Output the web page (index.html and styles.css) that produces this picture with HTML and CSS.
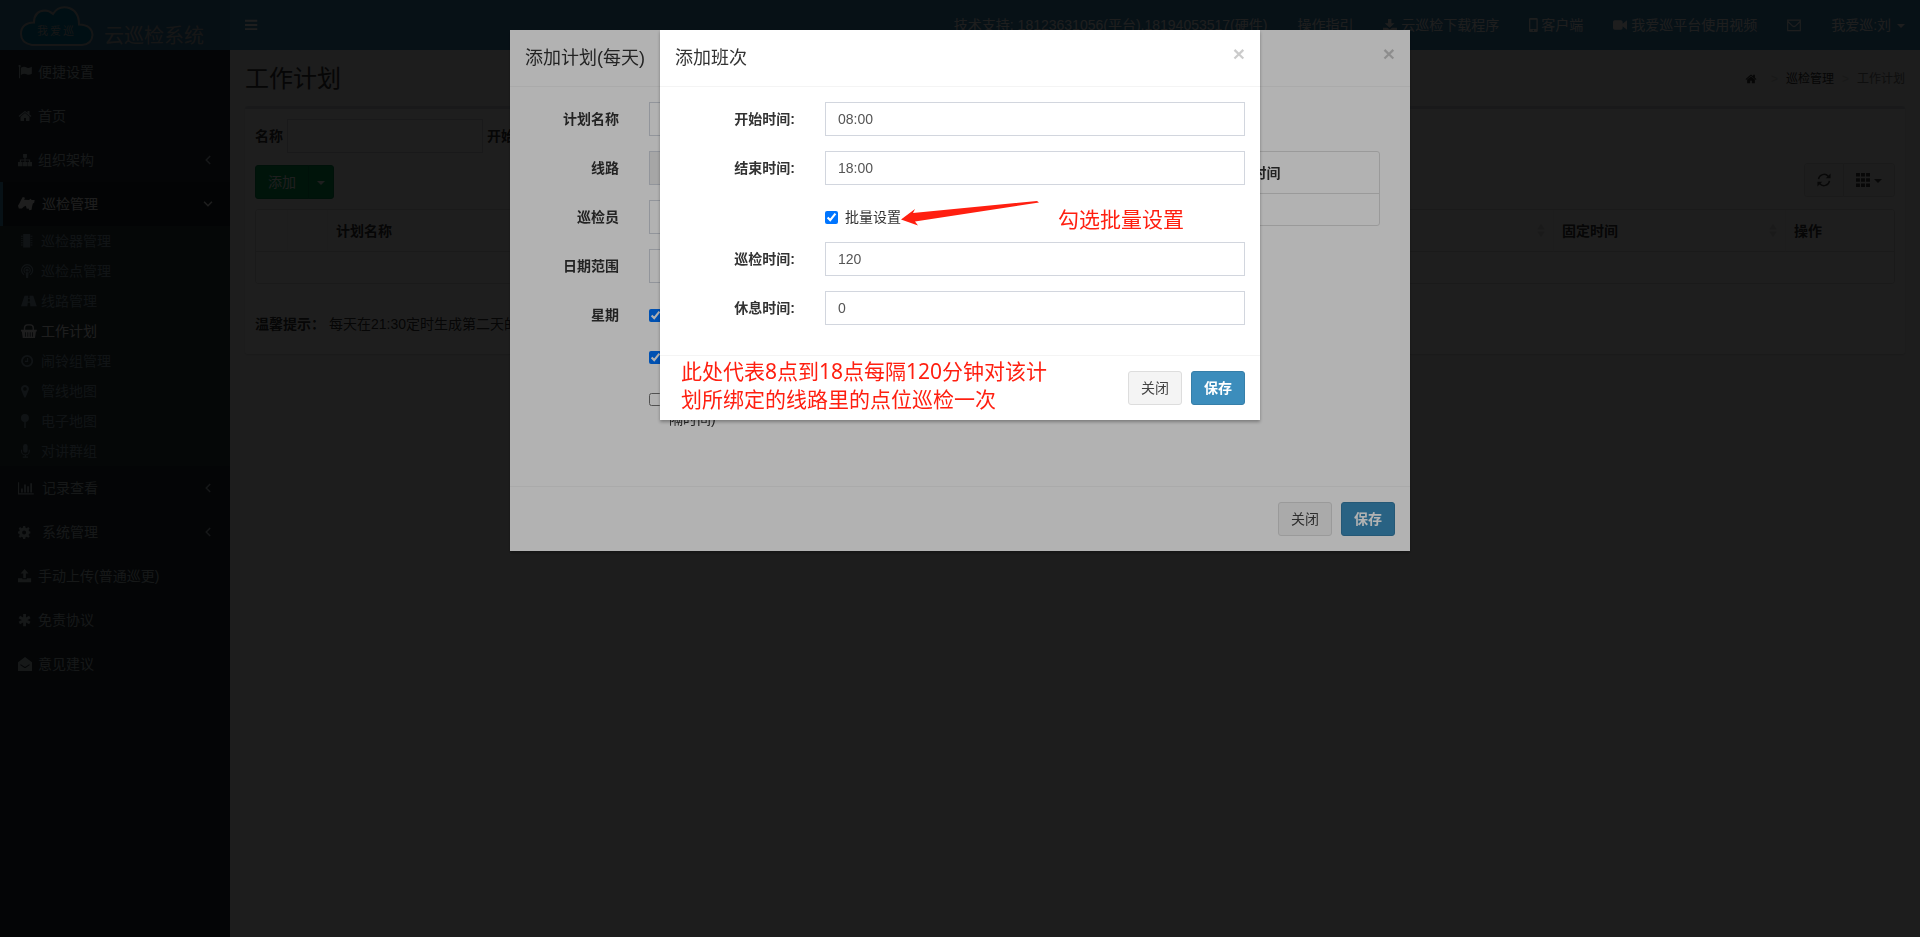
FILE: index.html
```html
<!DOCTYPE html>
<html lang="zh-CN">

<head>
  <meta charset="UTF-8">
  <meta name="viewport" content="width=device-width, initial-scale=1.0">
  <title>工作计划</title>
  <link rel="stylesheet" href="styles.css">
</head>

<body>
  <!-- Icon set -->
  <svg class="icon-set" aria-hidden="true">
    <symbol id="i-bars" viewBox="0 0 16 16" preserveAspectRatio="xMinYMid"><path d="M0 2h14v2.200H0zM0 6.800h14V9H0zM0 11.600h14v2.200H0z"/></symbol>
    <symbol id="i-flag" viewBox="0 0 16 16" preserveAspectRatio="xMinYMid"><path d="M.5 1.200a1.300 1.300 0 1 1 1.900 1.200V15H1.200V2.300A1.300 1.300 0 0 1 .5 1.200zM3.300 3c3-1.600 4.600-1.300 7.200 0 1.900.8 3.500 0 5.300-1v8c-2.200 1.300-3.800 1.700-6 .6-2.300-1.100-4-.7-6.500.8z"/></symbol>
    <symbol id="i-home" viewBox="0 0 1792 1792" preserveAspectRatio="xMinYMid"><path d="M1472 992v480q0 26-19 45t-45 19h-384v-384h-256v384h-384q-26 0-45-19t-19-45v-480q0-1 .5-3t.5-3l575-474 575 474q1 2 1 6zm223-69l-62 74q-8 9-21 11h-3q-13 0-21-7l-692-577-692 577q-12 8-24 7-13-2-21-11l-62-74q-8-10-7-23.5t11-21.5l719-599q32-26 76-26t76 26l244 204v-195q0-14 9-23t23-9h192q14 0 23 9t9 23v408l219 182q10 8 11 21.500t-7 23.500z"/></symbol>
    <symbol id="i-sitemap" viewBox="0 0 16 16" preserveAspectRatio="xMinYMid"><path d="M5.800 1h4.400v4.300H8.700v2h5.200v3H16V15h-5v-4.700h1.500V8.600H8.700v1.700h1.800V15h-5v-4.700h1.800V8.600H3.500v1.700H5V15H0v-4.700h2.100v-3h5.200v-2H5.800z"/></symbol>
    <symbol id="i-hands" viewBox="0 0 19 16" preserveAspectRatio="xMinYMid"><path d="M5.500 0L8 .8 7 3l5.500.5L14.500 2l1 1.500h3.500l-.5 3-1.500 1L16 11l-.5 3.500L13 15l-1-2-2 .5L9 10l-2.500 1L4.500 13H1L0 10l2-3.500 1.500-3z"/></symbol>
    <symbol id="i-chip" viewBox="0 0 16 16" preserveAspectRatio="xMinYMid"><path d="M2.500 0h8v15.500h-8zM0 2h2v1H0zM0 4.500h2v1H0zM0 7h2v1H0zM0 9.500h2v1H0zM0 12h2v1H0zM11 2h2v1h-2zM11 4.500h2v1h-2zM11 7h2v1h-2zM11 9.500h2v1h-2zM11 12h2v1h-2z"/></symbol>
    <symbol id="i-podcast" viewBox="0 0 16 16" preserveAspectRatio="xMinYMid"><g fill="none" stroke="currentColor" stroke-width="1.300"><path d="M3.500 12.300a6.300 6.300 0 1 1 7 0"/><path d="M4.500 9.800a3.600 3.600 0 1 1 5 0"/></g><circle cx="7" cy="7" r="1.700"/><path d="M5.300 9.500h3.400L8.100 16H5.900z"/></symbol>
    <symbol id="i-road" viewBox="0 0 18 16" preserveAspectRatio="xMinYMid"><path d="M4 2h4.300l-.2 2.500h1.800L9.700 2H14l4 12h-7.300l-.4-4H7.700l-.4 4H0zM8 5.500L7.800 8.700h2.400L10 5.500z" fill-rule="evenodd"/></symbol>
    <symbol id="i-basket" viewBox="0 0 18 16" preserveAspectRatio="xMinYMid"><path d="M4 7V4.500Q4 1 7.500 1h3Q14 1 14 4.500V7" fill="none" stroke="currentColor" stroke-width="1.600"/><path d="M0 6.500h18v2h-1L16 16H2L1 8.500H0zM4.500 9.500v5h1v-5zM7.300 9.500v5h1v-5zM10 9.500v5h1v-5zM12.700 9.500v5h1v-5z" fill-rule="evenodd"/></symbol>
    <symbol id="i-clock" viewBox="0 0 16 16" preserveAspectRatio="xMinYMid"><g fill="none" stroke="currentColor"><circle cx="7" cy="8" r="5.900" stroke-width="2"/><path d="M7.500 4.500v4h-3" stroke-width="1.300"/></g></symbol>
    <symbol id="i-marker" viewBox="0 0 10 16" preserveAspectRatio="xMinYMid"><path d="M4.500 1a4.500 4.500 0 0 1 4 6.500L5.300 15q-.8 1-1.600 0L.5 7.500A4.500 4.500 0 0 1 4.500 1zm0 2.500a2 2 0 1 0 0 4.200 2 2 0 0 0 0-4.200z" fill-rule="evenodd"/></symbol>
    <symbol id="i-pin" viewBox="0 0 10 16" preserveAspectRatio="xMinYMid"><circle cx="4.500" cy="4.500" r="4.500"/><path d="M3.700 9h1.700v7H3.700z"/></symbol>
    <symbol id="i-mic" viewBox="0 0 11 16" preserveAspectRatio="xMinYMid"><rect x="2.500" y="0" width="5" height="10" rx="2.500"/><path d="M.6 6.500v2a4.400 4 0 0 0 8.800 0v-2M5 12.500V15M2 15h6" fill="none" stroke="currentColor" stroke-width="1.200"/></symbol>
    <symbol id="i-chart" viewBox="0 0 18 16" preserveAspectRatio="xMinYMid"><path d="M0 1.500h1.300V14H18v1.300H0zM3.500 8.500h2V13h-2zM7 4h2v9H7zM10.500 6h2v7h-2zM14 2.500h2V13h-2z"/></symbol>
    <symbol id="i-cog" viewBox="0 0 16 16" preserveAspectRatio="xMinYMid"><path d="M5.900 1h2.300l.4 2 1.400.6 1.700-1.200 1.600 1.700-1.200 1.600.5 1.300 1.500.4v2.300l-1.500.4-.5 1.300 1.200 1.700-1.600 1.600-1.700-1.200-1.400.6-.4 2H5.900l-.4-2-1.400-.6-1.700 1.200-1.600-1.600L2 11.400l-.5-1.300L0 9.700V7.400L1.500 7 2 5.700.8 4.100l1.600-1.700 1.700 1.200L5.500 3zM7 6.200a2.300 2.300 0 1 0 0 4.600 2.300 2.300 0 0 0 0-4.600z" fill-rule="evenodd"/></symbol>
    <symbol id="i-upload" viewBox="0 0 16 16" preserveAspectRatio="xMinYMid"><path d="M7.500 0L12 5H9v5.500H6V5H3zM0 10.500h5v1.200h5v-1.200h5V15H0z"/></symbol>
    <symbol id="i-download" viewBox="0 0 16 16" preserveAspectRatio="xMinYMid"><path d="M5.700 1h3.900v5h3.600L7.700 11.200 2 6h3.700zM0 11h5l2.700 2 2.700-2H16v4H0z"/></symbol>
    <symbol id="i-asterisk" viewBox="0 0 16 16" preserveAspectRatio="xMinYMid"><path d="M7.500 1v14M1.500 4.500l12 7M13.500 4.500l-12 7" fill="none" stroke="currentColor" stroke-width="3.200"/></symbol>
    <symbol id="i-envelope-open" viewBox="0 0 16 16" preserveAspectRatio="xMinYMid"><path d="M8 0l8 6v10H0V6zM2.500 9L7 12.200q1 .6 2 0L13.500 9l-.6-.8L9 10.900q-1 .7-2 0L3.100 8.200z" fill-rule="evenodd"/></symbol>
    <symbol id="i-envelope" viewBox="0 0 16 16" preserveAspectRatio="xMinYMid"><path d="M.8 2.400h14.400v12H.8zM1 4l5.500 5.200q1.500 1.200 3 0L15 4" fill="none" stroke="currentColor" stroke-width="1.300"/></symbol>
    <symbol id="i-phone" viewBox="0 0 10 16" preserveAspectRatio="xMinYMid"><path d="M1.500 0h7Q10 0 10 1.500v13Q10 16 8.500 16h-7Q0 16 0 14.500v-13Q0 0 1.500 0zm0 2v10.500h7V2zM5 13.300a.9.900 0 1 0 0 1.800.9.900 0 0 0 0-1.800z" fill-rule="evenodd"/></symbol>
    <symbol id="i-video" viewBox="0 0 16 16" preserveAspectRatio="xMinYMid"><path d="M2 2.500h7q2 0 2 2v2.200L16 2.500v11l-5-4.200v2.200q0 2-2 2H2q-2 0-2-2v-7q0-2 2-2z"/></symbol>
    <symbol id="i-angle" viewBox="0 0 16 16"><path d="M10.500 3.500L6 8l4.500 4.500" fill="none" stroke="currentColor" stroke-width="1.700"/></symbol>
    <symbol id="i-refresh" viewBox="0 0 16 16"><path d="M1.700 7A6.400 6.400 0 0 1 13 4M14.300 9A6.400 6.400 0 0 1 3 12" fill="none" stroke="currentColor" stroke-width="1.700"/><path d="M15.500.5V6H10zM.5 15.500V10H6z"/></symbol>
    <symbol id="i-grid" viewBox="0 0 16 16"><path d="M0 0h4.500v4H0zM5.700 0h4.500v4H5.700zM11.500 0H16v4h-4.500zM0 6h4.500v4H0zM5.700 6h4.500v4H5.700zM11.500 6H16v4h-4.500zM0 12h4.500v4H0zM5.700 12h4.500v4H5.700zM11.500 12H16v4h-4.500z"/></symbol>
  </svg>

  <!-- Header section -->
  <header class="main-header">
    <a class="logo" href="#">
      <svg class="logo-cloud" viewBox="0 0 74 42">
        <path d="M12 40Q1 38 1 29 1 18 14 17.500 14 6 25 5.500q4 0 8 3.500Q38 1 47 2.500 59 5 59 19.500 72 20 72.500 30 72 39 62 40z" fill="#007fa8" stroke="#bbb" stroke-width="2"/>
        <text class="logo-mark" y="30"><tspan x="17">我</tspan><tspan x="30">爱</tspan><tspan x="43">巡</tspan></text>
      </svg>
      <span class="logo-text">云巡检系统</span>
    </a>
    <nav class="navbar">
      <button class="toggle" type="button" aria-label="菜单"><svg class="icon"><use href="#i-bars"/></svg></button>
      <ul class="nav-links">
        <li><a href="#">技术支持: 18123631056(平台),18194053517(硬件)</a></li>
        <li><a href="#">操作指引</a></li>
        <li><a href="#"><svg class="icon"><use href="#i-download"/></svg> 云巡检下载程序</a></li>
        <li><a href="#"><svg class="icon icon-phone"><use href="#i-phone"/></svg>客户端</a></li>
        <li><a href="#"><svg class="icon"><use href="#i-video"/></svg> 我爱巡平台使用视频</a></li>
        <li><a href="#" aria-label="消息"><svg class="icon"><use href="#i-envelope"/></svg></a></li>
        <li><a href="#">我爱巡:刘 <span class="caret user-caret"></span></a></li>
      </ul>
    </nav>
  </header>

  <div class="wrapper">
    <!-- Sidebar section -->
    <aside class="sidebar">
      <ul class="menu">
        <li><a href="#"><svg class="icon"><use href="#i-flag"/></svg>便捷设置</a></li>
        <li><a href="#"><svg class="icon"><use href="#i-home"/></svg>首页</a></li>
        <li><a href="#"><svg class="icon"><use href="#i-sitemap"/></svg>组织架构<svg class="icon arrow"><use href="#i-angle"/></svg></a></li>
        <li class="active">
          <a class="wide" href="#"><svg class="icon"><use href="#i-hands"/></svg>巡检管理<svg class="icon arrow open"><use href="#i-angle"/></svg></a>
          <ul class="submenu">
            <li><a href="#"><svg class="icon"><use href="#i-chip"/></svg>巡检器管理</a></li>
            <li><a href="#"><svg class="icon"><use href="#i-podcast"/></svg>巡检点管理</a></li>
            <li><a href="#"><svg class="icon"><use href="#i-road"/></svg>线路管理</a></li>
            <li class="current"><a href="#"><svg class="icon"><use href="#i-basket"/></svg>工作计划</a></li>
            <li><a href="#"><svg class="icon"><use href="#i-clock"/></svg>闹铃组管理</a></li>
            <li><a href="#"><svg class="icon"><use href="#i-marker"/></svg>管线地图</a></li>
            <li><a href="#"><svg class="icon"><use href="#i-pin"/></svg>电子地图</a></li>
            <li><a href="#"><svg class="icon"><use href="#i-mic"/></svg>对讲群组</a></li>
          </ul>
        </li>
        <li><a class="wide" href="#"><svg class="icon"><use href="#i-chart"/></svg>记录查看<svg class="icon arrow"><use href="#i-angle"/></svg></a></li>
        <li><a class="wide" href="#"><svg class="icon"><use href="#i-cog"/></svg>系统管理<svg class="icon arrow"><use href="#i-angle"/></svg></a></li>
        <li><a href="#"><svg class="icon"><use href="#i-upload"/></svg>手动上传(普通巡更)</a></li>
        <li><a href="#"><svg class="icon"><use href="#i-asterisk"/></svg>免责协议</a></li>
        <li><a href="#"><svg class="icon"><use href="#i-envelope-open"/></svg>意见建议</a></li>
      </ul>
    </aside>

    <!-- Main content section -->
    <main class="content">
      <div class="content-header">
        <h1>工作计划</h1>
        <ol class="breadcrumb">
          <li><a href="#" aria-label="首页"><svg class="icon"><use href="#i-home"/></svg></a></li>
          <li><a href="#">巡检管理</a></li>
          <li>工作计划</li>
        </ol>
      </div>

      <section class="box">
        <form class="search">
          <label for="search-name">名称</label>
          <input class="form-control" id="search-name" type="text">
          <label for="search-start">开始时间</label>
          <input class="form-control" id="search-start" type="text">
        </form>

        <div class="toolbar">
          <div class="btn-group add-group">
            <button class="btn btn-success" type="button">添加</button>
            <button class="btn btn-success btn-caret" type="button" aria-label="更多"><span class="caret"></span></button>
          </div>
          <div class="btn-group">
            <button class="btn btn-default" type="button" aria-label="刷新"><svg class="icon"><use href="#i-refresh"/></svg></button>
            <button class="btn btn-default" type="button" aria-label="列"><svg class="icon"><use href="#i-grid"/></svg> <span class="caret"></span></button>
          </div>
        </div>

        <table class="table plan-table">
          <thead>
            <tr>
              <th class="col-check"></th>
              <th class="col-index"></th>
              <th>计划名称</th>
              <th>线路</th>
              <th>巡检员</th>
              <th>日期范围</th>
              <th><div class="sortable">星期</div></th>
              <th class="col-time"><div class="sortable">固定时间</div></th>
              <th class="col-action">操作</th>
            </tr>
          </thead>
          <tbody>
            <tr><td colspan="9"></td></tr>
          </tbody>
        </table>

        <p class="tip"><strong>温馨提示：</strong>每天在21:30定时生成第二天的计划</p>
      </section>
    </main>
  </div>

  <!-- Plan dialog -->
  <div class="backdrop backdrop-plan"></div>
  <div class="modal modal-plan" role="dialog" aria-labelledby="plan-title">
    <div class="modal-header">
      <h4 id="plan-title">添加计划(每天)</h4>
      <button class="close" type="button" aria-label="关闭">×</button>
    </div>
    <div class="modal-body plan-body">
      <form class="plan-form">
        <div class="form-group">
          <label for="plan-name">计划名称</label>
          <div class="field"><input class="form-control" id="plan-name" type="text"></div>
        </div>
        <div class="form-group">
          <label for="plan-line">线路</label>
          <div class="field"><input class="form-control" id="plan-line" type="text" readonly></div>
        </div>
        <div class="form-group">
          <label for="plan-user">巡检员</label>
          <div class="field"><input class="form-control" id="plan-user" type="text"></div>
        </div>
        <div class="form-group">
          <label for="plan-range">日期范围</label>
          <div class="field"><input class="form-control" id="plan-range" type="text"></div>
        </div>
        <div class="form-group">
          <label for="plan-week">星期</label>
          <div class="field">
            <label class="checkbox"><input id="plan-week" type="checkbox" checked>星期一</label>
          </div>
        </div>
        <div class="form-group">
          <div class="field">
            <label class="checkbox"><input type="checkbox" checked>星期日</label>
          </div>
        </div>
        <div class="form-group">
          <div class="field">
            <label class="checkbox"><input type="checkbox"><span>固定时间(巡检间<br>隔时间)</span></label>
          </div>
        </div>
      </form>
      <div class="shift-list">
        <table class="table shift-table">
          <thead><tr><th>开始时间</th><th>结束时间</th></tr></thead>
          <tbody><tr><td colspan="2"></td></tr></tbody>
        </table>
      </div>
    </div>
    <div class="modal-footer">
      <button class="btn btn-default" type="button">关闭</button>
      <button class="btn btn-primary" type="button">保存</button>
    </div>
  </div>

  <!-- Shift dialog -->
  <div class="backdrop backdrop-shift"></div>
  <div class="modal modal-shift" role="dialog" aria-labelledby="shift-title">
    <div class="modal-header">
      <h4 id="shift-title">添加班次</h4>
      <button class="close" type="button" aria-label="关闭">×</button>
    </div>
    <form class="modal-body shift-body">
      <div class="form-group">
        <label for="shift-start">开始时间:</label>
        <div class="field"><input class="form-control" id="shift-start" type="text" value="08:00"></div>
      </div>
      <div class="form-group">
        <label for="shift-end">结束时间:</label>
        <div class="field"><input class="form-control" id="shift-end" type="text" value="18:00"></div>
      </div>
      <div class="form-group">
        <div class="field">
          <label class="checkbox"><input type="checkbox" checked>批量设置</label>
        </div>
      </div>
      <div class="form-group">
        <label for="shift-patrol">巡检时间:</label>
        <div class="field"><input class="form-control" id="shift-patrol" type="text" value="120"></div>
      </div>
      <div class="form-group">
        <label for="shift-rest">休息时间:</label>
        <div class="field"><input class="form-control" id="shift-rest" type="text" value="0"></div>
      </div>
    </form>
    <div class="modal-footer">
      <button class="btn btn-default" type="button">关闭</button>
      <button class="btn btn-primary" type="button">保存</button>
    </div>

    <!-- Notes drawn over the dialog -->
    <svg class="note-arrow" viewBox="0 0 138 26"><path d="M0 18.500L14 8l-2 4L136 0l2 1.500L14 20.500l3 4z" fill="#ff1f10"/></svg>
    <p class="note note-check">勾选批量设置</p>
    <p class="note note-result">此处代表8点到18点每隔120分钟对该计<br>划所绑定的线路里的点位巡检一次</p>
  </div>
</body>

</html>
```

FILE: styles.css
```css
* {
  box-sizing: border-box;
}

body {
  margin: 0;
  min-height: 100vh;
  overflow: hidden;
  display: flex;
  flex-direction: column;
  font-family: "Liberation Sans", "Noto Sans CJK SC", sans-serif;
  font-size: 14px;
  line-height: 20px;
  color: #333;
  background-color: #f0f0f0;
}

ul,
ol {
  list-style: none;
  margin: 0;
  padding: 0;
}

a {
  color: inherit;
  text-decoration: none;
}

h1,
h4,
p {
  margin: 0;
  font-weight: 400;
}

button,
input {
  font: inherit;
}

.icon-set {
  position: absolute;
  width: 0;
  height: 0;
}

.icon {
  width: 14px;
  height: 14px;
  fill: currentColor;
  vertical-align: -2px;
}

.icon-phone {
  width: 12px;
}

.caret {
  display: inline-block;
  border-top: 4px solid;
  border-left: 4px solid transparent;
  border-right: 4px solid transparent;
  vertical-align: middle;
}

.user-caret {
  margin-left: 2px;
}

/* Header */
.main-header {
  display: flex;
  height: 50px;
  color: #fff;
  background-color: #3c8dbc;
}

.logo {
  display: flex;
  gap: 10px;
  width: 230px;
  padding: 5px 20px;
  background-color: #367fa9;
}

.logo-cloud {
  width: 74px;
  height: 42px;
}

.logo-mark {
  font-family: "Liberation Serif", "Noto Sans CJK SC", serif;
  font-size: 11px;
  fill: #bbb;
}

.logo-text {
  padding-top: 16px;
  font-size: 20px;
  line-height: 30px;
  color: #bbb;
}

.navbar {
  flex: 1;
  display: flex;
  justify-content: space-between;
}

.toggle {
  padding: 15px;
  border: 0;
  color: #fff;
  background: none;
}

.nav-links {
  display: flex;
}

.nav-links a {
  display: block;
  padding: 15px;
  white-space: nowrap;
}

/* Sidebar */
.wrapper {
  flex: 1;
  display: flex;
}

.sidebar {
  width: 230px;
  color: #b8c7ce;
  background-color: #222d32;
}

.menu > li > a {
  display: flex;
  align-items: center;
  padding: 12px 15px;
  border-left: 3px solid transparent;
}

.menu .icon {
  margin-right: 6px;
}

.menu .wide .icon {
  width: 18px;
}

.menu .arrow,
.menu .wide .arrow {
  width: 14px;
  margin: 0 0 0 auto;
}

.menu .open {
  transform: rotate(-90deg);
}

.menu > .active > a {
  color: #fff;
  background-color: #1e282c;
  border-left-color: #3c8dbc;
}

.submenu {
  color: #8aa4af;
  background-color: #2c3b41;
}

.submenu a {
  display: flex;
  align-items: center;
  padding: 5px 5px 5px 21px;
}

.menu .submenu .icon {
  width: 16px;
  margin-right: 4px;
}

.submenu .current {
  color: #fff;
}

/* Content */
.content {
  flex: 1;
  padding: 15px;
}

.content-header {
  display: flex;
  justify-content: space-between;
  align-items: center;
  margin-bottom: 14px;
}

.content-header h1 {
  font-size: 24px;
  line-height: 27px;
}

.breadcrumb {
  display: flex;
  font-size: 12px;
  color: #777;
}

.breadcrumb a {
  color: #333;
}

.breadcrumb li + li::before {
  content: ">";
  padding: 0 8px;
  color: #ccc;
}

.breadcrumb .icon {
  width: 12px;
  height: 12px;
  margin-right: 6px;
}

.box {
  padding: 10px;
  border-top: 3px solid #d2d6de;
  border-radius: 3px;
  background-color: #fff;
  box-shadow: 0 1px 1px rgba(0, 0, 0, .1);
}

.search {
  display: flex;
  align-items: center;
  gap: 4px;
}

.search label {
  font-weight: 700;
}

.search .form-control {
  width: 196px;
}

.toolbar {
  display: flex;
  justify-content: space-between;
  align-items: flex-start;
  margin: 10px 0;
}

.add-group {
  padding-top: 2px;
}

.tip {
  padding: 30px 0 10px;
}

.tip strong {
  margin-right: 4px;
}

/* Controls */
.form-control {
  display: block;
  width: 100%;
  height: 34px;
  padding: 6px 12px;
  border: 1px solid #d2d6de;
  color: #555;
  background-color: #fff;
}

.form-control[readonly] {
  background-color: #eee;
}

.btn {
  padding: 6px 12px;
  border: 1px solid;
  border-radius: 3px;
}

.btn-default {
  color: #444;
  background-color: #f4f4f4;
  border-color: #ddd;
}

.btn-primary {
  color: #fff;
  font-weight: 700;
  background-color: #3c8dbc;
  border-color: #367fa9;
}

.btn-success {
  color: #fff;
  background-color: #00a65a;
  border-color: #008d4c;
}

.btn-group {
  display: flex;
}

.btn-group .btn:first-child {
  border-radius: 3px 0 0 3px;
}

.btn-group .btn:last-child {
  margin-left: -1px;
  border-radius: 0 3px 3px 0;
}

.btn-caret {
  padding: 6px 8px;
}

/* Tables */
.table {
  width: 100%;
  table-layout: fixed;
  border: 1px solid #ddd;
  border-radius: 3px;
  border-spacing: 0;
}

.table th {
  height: 42px;
  padding: 0 8px;
  border-bottom: 1px solid #ddd;
  text-align: left;
}

.plan-table th + th {
  border-left: 1px solid #f1f1f1;
}

.table td {
  height: 31px;
}

.col-check {
  width: 31px;
}

.col-index {
  width: 40px;
}

.col-time {
  width: 232px;
}

.col-action {
  width: 109px;
}

.sortable {
  display: flex;
  justify-content: space-between;
  align-items: center;
}

/* Up and down arrows of a sortable column */
.sortable::after {
  content: "";
  width: 8px;
  height: 14px;
  background-color: #ddd;
  clip-path: polygon(50% 0, 100% 43%, 0 43%, 0 57%, 100% 57%, 50% 100%, 0 57%, 0 43%);
}

/* Dialogs */
.backdrop {
  position: fixed;
  inset: 0;
  background-color: #000;
}

.backdrop-plan {
  opacity: .83;
}

.backdrop-shift {
  opacity: .3;
}

.modal {
  position: fixed;
  top: 30px;
  left: 50%;
  transform: translateX(-50%);
  background-color: #fff;
  box-shadow: 0 2px 3px rgba(0, 0, 0, .3);
}

.modal-plan {
  width: 900px;
}

.modal-shift {
  width: 600px;
}

.modal-header {
  display: flex;
  justify-content: space-between;
  align-items: flex-start;
  padding: 15px;
  border-bottom: 1px solid #f4f4f4;
}

.modal-header h4 {
  font-size: 18px;
  line-height: 26px;
}

.close {
  padding: 0;
  border: 0;
  font-size: 21px;
  font-weight: 700;
  line-height: 18px;
  color: #000;
  background: none;
  opacity: .2;
}

.modal-body {
  padding: 15px 0;
}

.plan-body {
  display: flex;
  min-height: 399px;
}

.plan-form {
  width: 496px;
}

.shift-list {
  flex: 1;
  padding: 49px 30px 0 15px;
}

.shift-table th {
  padding-left: 24px;
}

.form-group {
  display: flex;
  justify-content: flex-end;
  margin-bottom: 15px;
}

.form-group > label {
  width: 25%;
  padding: 7px 15px 0;
  font-weight: 700;
  text-align: right;
}

.field {
  width: 75%;
  padding: 0 15px;
}

.checkbox {
  display: flex;
  align-items: flex-start;
  gap: 7px;
  padding-top: 7px;
}

.checkbox input {
  margin: 4px 0 0;
}

.modal-footer {
  display: flex;
  justify-content: flex-end;
  gap: 9px;
  padding: 15px;
  border-top: 1px solid #f4f4f4;
}

/* Notes */
.note {
  position: absolute;
  font-family: "Noto Sans", "Noto Sans CJK SC", sans-serif;
  font-size: 21px;
  line-height: 28px;
  color: #ff1f10;
  white-space: nowrap;
}

.note-check {
  top: 175px;
  left: 398px;
}

.note-result {
  top: 327px;
  left: 21px;
}

.note-arrow {
  position: absolute;
  top: 171px;
  left: 241px;
  width: 138px;
  height: 26px;
}
```
